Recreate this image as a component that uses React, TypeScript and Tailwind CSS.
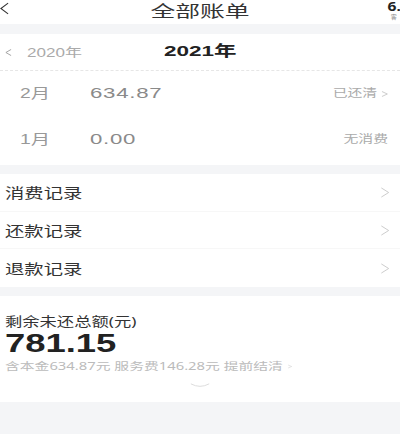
import React from "react";

const CJK = "font-['Noto_Sans','Noto_Sans_CJK_SC',sans-serif]";

function Chevron({ className = "" }: { className?: string }) {
  return (
    <svg viewBox="0 0 10 12" className={className} fill="none" stroke="currentColor" strokeWidth="1">
      <path d="M1 1 L9 6 L1 11" />
    </svg>
  );
}

const months = [
  { m: "2月", amt: "634.87", status: "已还清", arrow: true },
  { m: "1月", amt: "0.00", status: "无消费", arrow: false },
];

const records = ["消费记录", "还款记录", "退款记录"];

export default function App() {
  return (
    <div className={`w-[400px] h-[434px] overflow-hidden bg-[#f4f5f7] ${CJK}`}>
      {/* top bar */}
      <header className="relative h-[24px] bg-white flex items-center justify-center">
        <svg viewBox="0 0 10 14" className="absolute left-0 top-[2px] w-[9px] h-[13px] text-[#333]" fill="none" stroke="currentColor" strokeWidth="1.2">
          <path d="M9 1 L1 7 L9 13" />
        </svg>
        <span className="inline-block scale-x-[1.55] text-[16px] leading-none text-[#333] -mt-[3px]">全部账单</span>
        <div className="absolute right-[1px] top-[1px] flex flex-col items-center leading-none">
          <span className="inline-block scale-x-[1.3] text-[12px] font-bold text-[#222]">6.</span>
          <span className="text-[6px] text-[#888] mt-[1px]">客</span>
        </div>
      </header>

      {/* year block */}
      <section className="mt-[10px] bg-white h-[131px]">
        <div className="h-[36px] flex items-center relative">
          <svg viewBox="0 0 8 8" className="absolute left-[5px] top-[15px] w-[7px] h-[7px] text-[#999]" fill="none" stroke="currentColor" strokeWidth="1">
            <path d="M7 0.5 L1 4 L7 7.5" />
          </svg>
          <span className="absolute left-[27px] top-[10px] inline-block origin-left scale-x-[1.42] text-[12px] text-[#aaa] font-['Liberation_Sans','Noto_Sans_CJK_SC',sans-serif]">2020年</span>
          <span className="mx-auto inline-block scale-x-[1.5] text-[15px] font-bold text-[#222] font-['Liberation_Sans','Noto_Sans_CJK_SC',sans-serif] -mt-[1px]">2021年</span>
        </div>
        <div className="border-t border-dashed border-[#e6e6e6]" />
        {months.map((r) => (
          <div key={r.m} className="h-[47px] flex items-center px-[20px] -mt-[1px]">
            <span className="w-[70px] inline-block origin-left scale-x-[1.38] text-[14px] text-[#999] font-['Liberation_Sans','Noto_Sans_CJK_SC',sans-serif]">{r.m}</span>
            <span className="inline-block origin-left scale-x-[1.48] text-[15px] text-[#8a8a8a] font-['Liberation_Sans',sans-serif] tracking-[0.5px]">{r.amt}</span>
            <span className="ml-auto -mr-[8px] flex items-center text-[#aaa] origin-right scale-x-[1.35]">
              <span className="text-[11px]">{r.status}</span>
              {r.arrow && <Chevron className="ml-[3px] w-[5px] h-[8px]" />}
            </span>
          </div>
        ))}
      </section>

      {/* records */}
      <section className="mt-[9px] bg-white">
        {records.map((t, i) => (
          <div key={t} className={`h-[37.7px] flex items-center pl-[5px] pr-[10px] ${i < 2 ? "border-b border-[#f7f7f7]" : ""}`}>
            <span className="inline-block origin-left scale-x-[1.38] text-[14px] text-[#333]">{t}</span>
            <Chevron className="ml-auto w-[10px] h-[11px] text-[#c8c8c8]" />
          </div>
        ))}
      </section>

      {/* remaining */}
      <section className="mt-[9px] bg-white h-[106px] pl-[5px] pt-[17px] relative">
        <div className="h-[15px] leading-[15px]">
          <span className="inline-block origin-left scale-x-[1.33] text-[13px] leading-[15px] text-[#333]">剩余未还总额(元)</span>
        </div>
        <div className="mt-[3px] h-[24px] leading-[24px]">
          <span className="inline-block origin-left scale-x-[1.4] text-[26px] leading-[24px] font-bold text-[#222] font-['Liberation_Sans',sans-serif]">781.15</span>
        </div>
        <div className="mt-[3px] h-[12px] leading-[12px]">
          <span className="inline-flex items-center origin-left scale-x-[1.48] text-[10px] leading-[12px] text-[#bbb] whitespace-nowrap">
            <span>含本金634.87元 服务费146.28元 提前结清</span>
            <Chevron className="ml-[3px] w-[3px] h-[5px]" />
          </span>
        </div>
        <svg viewBox="0 0 24 6" className="absolute left-[188px] top-[87px] w-[24px] h-[5px] text-[#d6d6d6]" fill="none" stroke="currentColor" strokeWidth="1">
          <path d="M1 1 Q12 7 23 1" />
        </svg>
      </section>
    </div>
  );
}
